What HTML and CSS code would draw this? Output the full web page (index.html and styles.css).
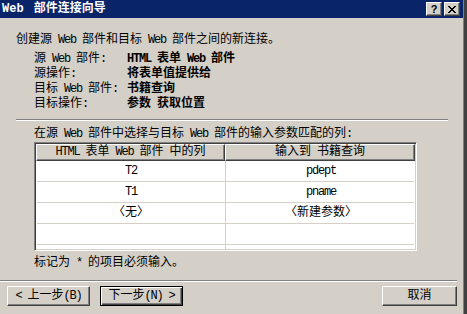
FILE: index.html
```html
<!DOCTYPE html>
<html>
<head>
<meta charset="utf-8">
<link rel="stylesheet" href="styles.css">
</head>
<body>
<div class="window">
  <div class="titlebar">
    <span class="title">Web 部件连接向导</span>
    <div class="capbtns">
      <span class="capbtn help">?</span>
      <span class="capbtn close">
        <svg width="8" height="7" viewBox="0 0 8 7"><path d="M0 0h2v1h-2zM6 0h2v1h-2zM1 1h2v1h-2zM5 1h2v1h-2zM2 2h4v1h-4zM3 3h2v1h-2zM2 4h4v1h-4zM1 5h2v1h-2zM5 5h2v1h-2zM0 6h2v1h-2zM6 6h2v1h-2z" fill="#000"/></svg>
      </span>
    </div>
  </div>
  <div class="content">
    <p class="intro">创建源<span class="en"> Web </span>部件和目标<span class="en"> Web </span>部件之间的新连接。</p>
    <div class="details">
      <span>源<span class="en"> Web </span>部件<span class="en">:</span></span><b><span class="en">HTML </span>表单<span class="en"> Web </span>部件</b>
      <span>源操作<span class="en">:</span></span><b>将表单值提供给</b>
      <span>目标<span class="en"> Web </span>部件<span class="en">:</span></span><b>书籍查询</b>
      <span>目标操作<span class="en">:</span></span><b>参数<span class="en"> </span>获取位置</b>
    </div>
    <div class="sep top"></div>
    <p class="instr">在源<span class="en"> Web </span>部件中选择与目标<span class="en"> Web </span>部件的输入参数匹配的列<span class="en">:</span></p>
    <div class="grid">
      <div class="hdr">
        <div class="hcell"><span class="en">HTML </span>表单<span class="en"> Web </span>部件<span class="en"> </span>中的列</div>
        <div class="hcell">输入到<span class="en"> </span>书籍查询</div>
      </div>
      <div class="row"><div class="cell en">T2</div><div class="cell en">pdept</div></div>
      <div class="row"><div class="cell en">T1</div><div class="cell en">pname</div></div>
      <div class="row"><div class="cell">〈无〉</div><div class="cell">〈新建参数〉</div></div>
      <div class="row"><div class="cell"></div><div class="cell"></div></div>
      <div class="row"><div class="cell"></div><div class="cell"></div></div>
    </div>
    <p class="note">标记为<span class="en"> * </span>的项目必须输入。</p>
  </div>
  <div class="sep bottom"></div>
  <div class="buttons">
    <button class="btn"><span class="en">&lt; </span>上一步<span class="en">(B)</span></button>
    <button class="btn default">下一步<span class="en">(N) &gt;</span></button>
    <span class="spacer"></span>
    <button class="btn cancel">取消</button>
  </div>
</div>
</body>
</html>
```

FILE: styles.css
```css
html, body {
  margin: 0;
  padding: 0;
  background: #404040;
}
body {
  font-family: "Liberation Mono", "Noto Sans CJK SC", monospace;
  font-size: 12px;
  color: #000;
}
.en {
  letter-spacing: -1.2px;
}
.window {
  width: 463px;
  height: 314px;
  background: #d4d0c8;
  border-right: 1px solid #808080;
  display: flex;
  flex-direction: column;
  overflow: hidden;
}
.titlebar {
  height: 18px;
  background: #0a246a;
  display: flex;
  align-items: center;
  justify-content: space-between;
  padding: 0 3px 0 2px;
  flex: none;
}
.title {
  color: #fff;
  font-weight: bold;
  line-height: 18px;
  word-spacing: 3px;
}
.capbtns {
  display: flex;
  gap: 2px;
}
.capbtn {
  width: 16px;
  height: 14px;
  box-sizing: border-box;
  background: #d4d0c8;
  border-top: 1px solid #fff;
  border-left: 1px solid #fff;
  border-right: 1px solid #404040;
  border-bottom: 1px solid #404040;
  box-shadow: inset -1px -1px 0 #808080;
  display: flex;
  align-items: center;
  justify-content: center;
  font-family: "Liberation Sans", sans-serif;
  font-weight: bold;
  font-size: 11px;
  line-height: 12px;
}
.content {
  padding: 15px 0 0 16px;
}
p {
  margin: 0;
  line-height: 15px;
}
.details {
  margin: 4px 0 0 18px;
  display: grid;
  grid-template-columns: 93px auto;
  line-height: 15px;
}
.details b {
  font-weight: bold;
}
.sep {
  height: 1px;
  border-top: 1px solid #808080;
  background: #fff;
}
.sep.top {
  margin-top: 7px;
  width: 432px;
}
.instr {
  margin: 6px 0 0 18px;
}
.grid {
  margin-left: 18px;
  width: 383px;
  height: 109px;
  box-sizing: border-box;
  border-top: 1px solid #808080;
  border-left: 1px solid #808080;
  border-right: 1px solid #fff;
  border-bottom: 1px solid #fff;
  box-shadow: inset 1px 1px 0 #404040, inset -1px -1px 0 #d4d0c8;
  padding: 2px;
  background: #fff;
  overflow: hidden;
}
.hdr {
  display: grid;
  grid-template-columns: 189px 190px;
  margin: -1px 0 0 -1px;
}
.hcell {
  height: 17px;
  box-sizing: border-box;
  background: #d4d0c8;
  border-top: 1px solid #fff;
  border-left: 1px solid #fff;
  border-right: 1px solid #404040;
  border-bottom: 1px solid #404040;
  box-shadow: inset -1px -1px 0 #808080;
  text-align: center;
  line-height: 15px;
}
.row {
  display: grid;
  grid-template-columns: 189px 190px;
  height: 21px;
  box-sizing: border-box;
  border-bottom: 1px solid #d4d0c8;
}
.cell {
  text-align: center;
  line-height: 20px;
}
.cell:first-child {
  border-right: 1px solid #d4d0c8;
}
.note {
  margin: 5px 0 0 18px;
}
.sep.bottom {
  margin-top: 9px;
  width: 457px;
}
.buttons {
  display: flex;
  padding: 4px 6px 0 7px;
  gap: 10px;
}
.spacer {
  flex: 1;
}
.btn {
  font: inherit;
  width: 83px;
  height: 20px;
  padding: 0;
  background: #d4d0c8;
  border-top: 1px solid #fff;
  border-left: 1px solid #fff;
  border-right: 1px solid #404040;
  border-bottom: 1px solid #404040;
  box-shadow: inset -1px -1px 0 #808080;
  line-height: 16px;
  color: #000;
}
.btn.default {
  border: 1px solid #000;
  box-shadow: inset 1px 1px 0 #fff, inset -1px -1px 0 #404040, inset -2px -2px 0 #808080;
}
.btn.cancel {
  width: 75px;
}
```
